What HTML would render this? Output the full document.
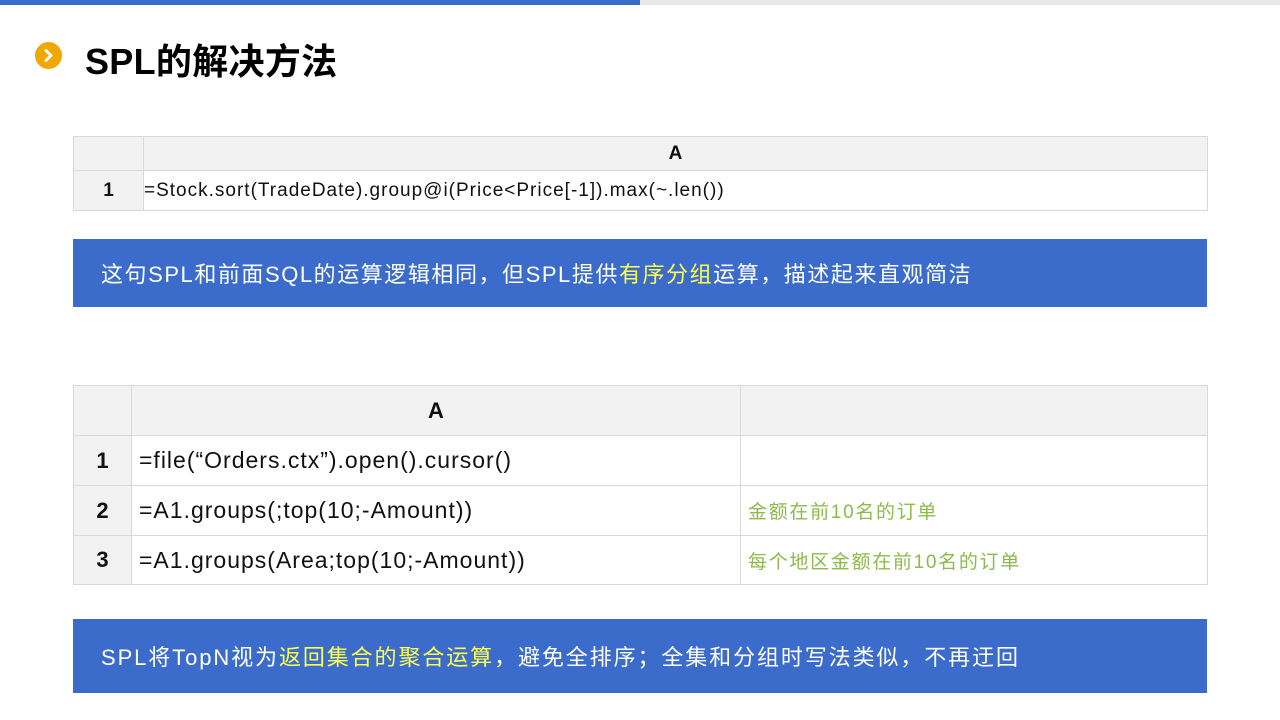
<!DOCTYPE html><html><head><meta charset="utf-8"><style>
body{margin:0;width:1280px;height:720px;position:relative;background:#fff;font-family:"Liberation Sans","Noto Sans CJK SC",sans-serif;overflow:hidden}
.a{position:absolute}
table{border-collapse:collapse;position:absolute;table-layout:fixed}
td{border:1px solid #d9d9d9;padding:0;color:#111}
.g{background:#f2f2f2;text-align:center;font-weight:bold}
.box{position:absolute;left:73px;width:1134px;background:#3c6ccb;color:#fff;font-size:22px;letter-spacing:1.55px;display:flex;align-items:center;box-sizing:border-box;padding-left:28px}
.y{color:#ffff4d}
.c{color:#8dba4a;font-size:19px;letter-spacing:1.7px;padding-left:7px}
.code{letter-spacing:1px}
</style></head><body>
<div class="a" style="left:0;top:0;width:640px;height:5px;background:#3c6ccb"></div>
<div class="a" style="left:640px;top:0;width:640px;height:5px;background:#e8e8e8"></div>
<div class="a" style="left:35px;top:42px;width:27px;height:27px;border-radius:50%;background:#f0a800"><svg width="27" height="27" style="position:absolute;left:0;top:0"><path d="M11 8.5 L16 13.5 L11 18.5" stroke="#fff" stroke-width="3" fill="none" stroke-linecap="round" stroke-linejoin="round"/></svg></div>
<div class="a" style="left:85px;top:33px;font-size:36px;font-weight:bold;color:#000;letter-spacing:0.3px">SPL的解决方法</div>
<table style="left:73px;top:136px;width:1135px">
<col style="width:70px"><col>
<tr style="height:34px"><td class="g"></td><td class="g" style="font-size:19px">A</td></tr>
<tr style="height:40px"><td class="g" style="font-size:19px">1</td><td class="code" style="font-size:19px">=Stock.sort(TradeDate).group@i(Price&lt;Price[-1]).max(~.len())</td></tr>
</table>
<div class="box" style="top:239px;height:68px">这句SPL和前面SQL的运算逻辑相同，但SPL提供<span class="y">有序分组</span>运算，描述起来直观简洁</div>
<table style="left:73px;top:385px;width:1135px">
<col style="width:58px"><col style="width:609px"><col>
<tr style="height:50px"><td class="g"></td><td class="g" style="font-size:22px">A</td><td class="g"></td></tr>
<tr style="height:50px"><td class="g" style="font-size:22px">1</td><td class="code" style="font-size:23px;padding-left:7px">=file(“Orders.ctx”).open().cursor()</td><td></td></tr>
<tr style="height:50px"><td class="g" style="font-size:22px">2</td><td class="code" style="font-size:23px;padding-left:7px">=A1.groups(;top(10;-Amount))</td><td class="c">金额在前10名的订单</td></tr>
<tr style="height:49px"><td class="g" style="font-size:22px">3</td><td class="code" style="font-size:23px;padding-left:7px">=A1.groups(Area;top(10;-Amount))</td><td class="c">每个地区金额在前10名的订单</td></tr>
</table>
<div class="box" style="top:619px;height:74px;letter-spacing:1.9px">SPL将TopN视为<span class="y">返回集合的聚合运算</span>，避免全排序；全集和分组时写法类似，不再迂回</div>
</body></html>
